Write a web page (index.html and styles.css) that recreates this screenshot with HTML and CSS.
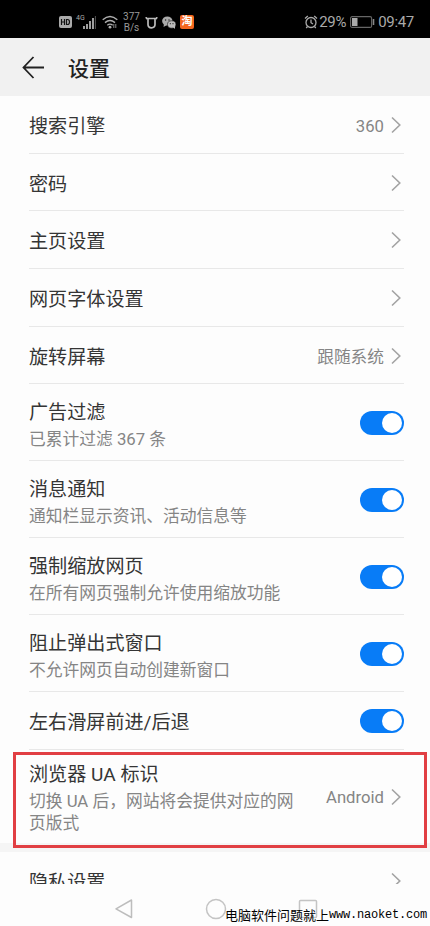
FILE: index.html
```html
<!DOCTYPE html>
<html lang="zh-CN">
<head>
<meta charset="utf-8">
<title>设置</title>
<link rel="stylesheet" href="styles.css">
</head>
<body>
<svg class="defs" width="0" height="0" aria-hidden="true">
  <symbol id="chevron" viewBox="0 0 10 18"><path d="M1 1.5 8.8 9 1 16.5" fill="none" stroke="#a3a3a3" stroke-width="1.6"/></symbol>
</svg>
<div class="screen">
  <div class="status">
    <div class="status-left">
      <svg class="hd" width="13" height="12" viewBox="0 0 13 12"><rect width="13" height="12" rx="2" fill="#aaa"/><path d="M2.5 3v6M5.5 3v6M2.5 6h3M7.5 3.5v5h1q2 0 2-2.5t-2-2.5z" fill="none" stroke="#111" stroke-width="1.2"/></svg>
      <span class="net">4G</span>
      <svg class="signal" width="13" height="13" viewBox="0 0 13 13"><path d="M1 10v3M4 8v5M7 5v8M10 2v11" stroke="#b0b0b0" stroke-width="1.8"/><path d="M12.4 0v13" stroke="#555" stroke-width="1"/></svg>
      <svg class="wifi" width="16" height="14" viewBox="0 0 16 14"><g fill="none" stroke="#b0b0b0" stroke-width="1.4"><path d="M.7 4.8q7.3-6.6 14.6 0M3 7.6q5-4.4 10 0M5.3 10.2q2.7-2.2 5.4 0"/></g><circle cx="8" cy="12.2" r="1.4" fill="#b0b0b0"/><path d="M11.8 9v4M13.8 9v4" stroke="#888" stroke-width="1"/></svg>
      <span class="speed">377<br>B/s</span>
      <svg class="cow" width="13" height="13" viewBox="0 0 13 13"><path d="M1 1.2Q1.300 3 3 3M12 1.200Q11.700 3 10 3M3 2.500h7v6q0 3.300-3.500 3.300T3 8.500z" fill="none" stroke="#bbb" stroke-width="1.700"/></svg>
      <svg class="wechat" width="14" height="13" viewBox="0 0 14 13"><ellipse cx="5.300" cy="5" rx="5.200" ry="4.500" fill="#aaa"/><path d="M2 8 1.500 11 5 9z" fill="#aaa"/><ellipse cx="9.700" cy="8.500" rx="4.200" ry="3.700" fill="#bbb" stroke="#111" stroke-width=".6"/><path d="m11 11 2 2V10z" fill="#bbb"/><g fill="#222"><circle cx="3.600" cy="4" r=".7"/><circle cx="7" cy="4" r=".7"/><circle cx="8.300" cy="7.700" r=".6"/><circle cx="11" cy="7.700" r=".6"/></g></svg>
      <span class="tao">淘</span>
    </div>
    <div class="status-right">
      <svg width="14" height="14" viewBox="0 0 14 14"><g fill="none" stroke="#aaa" stroke-width="1.300"><circle cx="7" cy="7.500" r="5"/><path d="M7 4.500v3.200l2 1.300M1 3.500 3.800 1M13 3.500 10.200 1M3.500 11.500 2.200 13M10.500 11.500l1.300 1.500"/></g></svg>
      <span class="pct">29%</span>
      <svg class="battery" width="25" height="12" viewBox="0 0 25 12"><rect x=".6" y=".6" width="21" height="10.800" rx="1.500" fill="none" stroke="#666" stroke-width="1.100"/><rect x="2" y="2" width="5.500" height="8" fill="#aaa"/><path d="M23.500 3v6" stroke="#888" stroke-width="1.600"/></svg>
      <span class="clock">09:47</span>
    </div>
  </div>
  <header class="header">
    <svg width="23" height="23" viewBox="0 0 23 23"><path d="M11.500 1 1.500 11.500l10 10.500M1.500 11.500h20.500" fill="none" stroke="#222" stroke-width="1.800"/></svg>
    <h1>设置</h1>
  </header>
  <main class="list">
    <div class="row"><div class="title">搜索引擎</div><div class="value">360</div><svg class="chev"><use href="#chevron"/></svg></div>
    <div class="row"><div class="title">密码</div><svg class="chev"><use href="#chevron"/></svg></div>
    <div class="row"><div class="title">主页设置</div><svg class="chev"><use href="#chevron"/></svg></div>
    <div class="row"><div class="title">网页字体设置</div><svg class="chev"><use href="#chevron"/></svg></div>
    <div class="row"><div class="title">旋转屏幕</div><div class="value">跟随系统</div><svg class="chev"><use href="#chevron"/></svg></div>
    <div class="row tall"><div class="text"><div class="title">广告过滤</div><div class="sub">已累计过滤 367 条</div></div><span class="toggle"></span></div>
    <div class="row tall"><div class="text"><div class="title">消息通知</div><div class="sub">通知栏显示资讯、活动信息等</div></div><span class="toggle"></span></div>
    <div class="row tall"><div class="text"><div class="title">强制缩放网页</div><div class="sub">在所有网页强制允许使用缩放功能</div></div><span class="toggle"></span></div>
    <div class="row tall"><div class="text"><div class="title">阻止弹出式窗口</div><div class="sub">不允许网页自动创建新窗口</div></div><span class="toggle"></span></div>
    <div class="row swipe"><div class="title">左右滑屏前进/后退</div><span class="toggle"></span></div>
    <div class="row ua"><div class="text"><div class="title">浏览器 UA 标识</div><div class="sub">切换 UA 后，网站将会提供对应的网页版式</div></div><div class="value">Android</div><svg class="chev"><use href="#chevron"/></svg></div>
    <div class="gap"></div>
    <div class="row last"><div class="title">隐私设置</div><svg class="chev"><use href="#chevron"/></svg></div>
  </main>
  <nav class="nav">
    <svg width="20" height="22" viewBox="0 0 20 22"><path d="M17.500 2v17.500L2 10.800z" fill="none" stroke="#bdbdbd" stroke-width="1.500" stroke-linejoin="round"/></svg>
    <svg width="22" height="22" viewBox="0 0 22 22"><circle cx="11" cy="11" r="9.500" fill="none" stroke="#c4c4c4" stroke-width="1.500"/></svg>
    <svg width="20" height="22" viewBox="0 0 20 22"><rect x="1.500" y="2.500" width="17" height="17" rx="1" fill="none" stroke="#c4c4c4" stroke-width="1.500"/></svg>
  </nav>
  <div class="highlight"></div>
  <div class="watermark"><span>电脑软件问题就上</span><span class="url">www.naoket.com</span></div>
</div>
</body>
</html>
```
FILE: styles.css
```css
* { box-sizing: border-box; }
body { margin: 0; background: #fdfdfd; font-family: Roboto, "Noto Sans CJK SC", sans-serif; }
.defs { position: absolute; }
.screen { position: relative; width: 430px; height: 926px; overflow: hidden; display: flex; flex-direction: column; }
.status { flex: none; height: 38px; background: #000; color: #aaa; display: flex; justify-content: space-between; padding: 6px 16px 0 59px; }
.status-left, .status-right { display: flex; align-items: center; height: 32px; }
.status svg { flex: none; }
.net { font-size: 7px; line-height: 8px; margin: -9px 0 0 4px; width: 8px; }
.signal { margin-left: -1px; }
.wifi { margin-left: 6px; }
.speed { font-size: 10px; line-height: 11px; width: 17px; margin-left: 5px; text-align: center; color: #999; }
.cow { margin-left: 5px; }
.wechat { margin-left: 4px; }
.tao { width: 14px; height: 14px; margin-left: 4px; border-radius: 2px; background: #f4661e; color: #fff; font-size: 11px; line-height: 14px; text-align: center; font-weight: 700; }
.pct { font-size: 15px; margin-left: 1px; width: 27px; letter-spacing: -.3px; }
.battery { margin-left: 4px; }
.clock { font-size: 15px; margin-left: 3px; letter-spacing: -.3px; }
.header { flex: none; height: 58px; background: #f1f1f1; display: flex; align-items: center; padding-left: 22px; gap: 23px; }
.header h1 { margin: 0; padding-top: 4px; font-size: 21px; line-height: 30px; font-weight: 500; color: #222; }
.list { flex: none; height: 788px; overflow: hidden; }
.row { height: 57.700px; margin: 0 26px 0 29px; border-bottom: 1px solid #e8e8e8; display: flex; align-items: center; padding-top: 1px; }
.text { flex: 1; }
.title { flex: 1; padding-top: 4px; font-size: 19.100px; line-height: 28px; color: #353535; white-space: nowrap; }
.sub { font-size: 16.750px; line-height: 22px; color: #858585; }
.value { padding-top: 4px; font-size: 16.700px; line-height: 24px; color: #858585; margin-right: 7px; }
.chev { width: 10px; height: 18px; margin-right: 3px; flex: none; }
.tall { height: 77px; padding-top: 2px; }
.tall .title { padding-top: 3px; }
.tall .sub { margin-top: 1px; }
.toggle { width: 44px; height: 24px; border-radius: 12px; background: #087cf7; display: flex; align-items: center; justify-content: flex-end; padding-right: 2px; flex: none; }
.toggle::after { content: ""; width: 20px; height: 20px; border-radius: 50%; background: #fff; }
.swipe { height: 58px; }
.ua { height: 92.500px; border: 0; padding: 0; }
.ua .text { flex: none; width: 272px; margin-right: auto; }
.ua .title { line-height: 30px; padding-top: 0; }
.ua .value { margin-left: -10px; padding-top: 2px; }
.gap { height: 9px; background: #f5f5f5; }
.last { border: 0; }
.nav { flex: none; height: 42px; display: flex; padding: 14px 112px 0 114px; justify-content: space-between; }
.highlight { position: absolute; left: 13px; top: 752px; width: 414px; height: 96px; border: 3px solid #e13f43; }
.watermark { position: absolute; left: 225px; top: 904px; display: flex; align-items: center; height: 20px; font-family: "Noto Sans CJK SC", sans-serif; font-size: 13px; color: #000; white-space: nowrap; }
.url { font-family: "Liberation Mono", monospace; font-size: 12px; letter-spacing: -.2px; padding-top: 2px; }
```
